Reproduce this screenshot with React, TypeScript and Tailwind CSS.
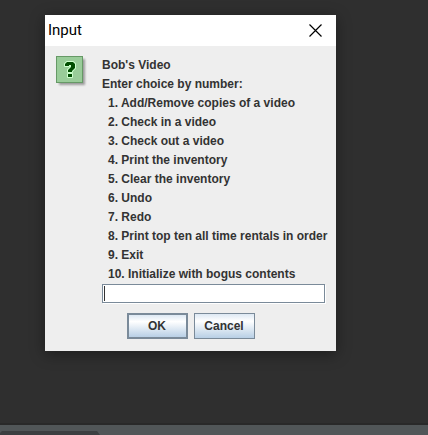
const choices = [
  "Add/Remove copies of a video",
  "Check in a video",
  "Check out a video",
  "Print the inventory",
  "Clear the inventory",
  "Undo",
  "Redo",
  "Print top ten all time rentals in order",
  "Exit",
  "Initialize with bogus contents",
];

function QuestionIcon() {
  return (
    <svg className="h-8 w-8 shrink-0" viewBox="0 0 32 32" aria-hidden="true">
      <defs>
        <filter id="soft" x="-20%" y="-20%" width="140%" height="140%">
          <feGaussianBlur stdDeviation="1.2" />
        </filter>
      </defs>
      <rect x="3" y="3" width="26" height="26" fill="#000" opacity="0.35" filter="url(#soft)" />
      <rect x="0.5" y="0.5" width="26" height="26" fill="#99cc99" stroke="#669966" />
      <path
        d="M9 10V8L11 6H17L19 8V12L16 15V16H12V14L15 11V9H13V10ZM12 18H16V21H12Z"
        fill="#ccffcc"
        stroke="#ccffcc"
        strokeWidth="2"
        strokeLinejoin="round"
      />
      <path
        d="M9 10V8L11 6H17L19 8V12L16 15V16H12V14L15 11V9H13V10ZM12 18H16V21H12Z"
        fill="#004d00"
      />
    </svg>
  );
}

function DialogButton({ label, primary = false }: { label: string; primary?: boolean }) {
  return (
    <button
      type="button"
      className={`h-[26px] w-[61px] border-[#7a8a99] bg-linear-to-b from-[#dde8f3] via-white via-30% to-[#b8cfe5] text-center ${
        primary ? "border-2" : "border"
      }`}
    >
      {label}
    </button>
  );
}

export default function App() {
  return (
    <div className="flex min-h-screen flex-col bg-[#2f2f2f]">
      <main className="flex grow items-start pt-[15px] pl-[45px]">
        <section
          role="dialog"
          aria-labelledby="dialog-title"
          className="w-[291px] bg-[#eeeeee] font-['Liberation_Sans',Arial,sans-serif] text-xs font-bold text-[#333333] shadow-[0_3px_14px_rgba(0,0,0,0.4)]"
        >
          <header className="flex h-[31px] items-center justify-between bg-white pr-[14px] pl-[3px]">
            <h1
              id="dialog-title"
              className="font-[Roboto,'Open_Sans',sans-serif] text-[15px] font-normal text-black"
            >
              Input
            </h1>
            <button type="button" aria-label="Close">
              <svg className="h-[13px] w-[13px]" viewBox="0 0 13 13" aria-hidden="true">
                <path d="M0.5 0.5L12.5 12.5M12.5 0.5L0.5 12.5" stroke="#000" strokeWidth="1.2" />
              </svg>
            </button>
          </header>
          <form className="px-[11px] pt-[10px] pb-3">
            <div className="flex gap-[14px]">
              <QuestionIcon />
              <div className="min-w-0 grow">
                <p className="leading-[19px]">Bob's Video</p>
                <label htmlFor="choice" className="block leading-[19px]">
                  Enter choice by number:
                </label>
                <ol className="pl-[6px] leading-[19px] whitespace-nowrap">
                  {choices.map((choice, i) => (
                    <li key={choice}>
                      {i + 1}. {choice}
                    </li>
                  ))}
                </ol>
                <div className="relative">
                  <input
                    id="choice"
                    type="text"
                    className="block h-[19px] w-full border border-[#7a8a99] bg-white px-[2px] shadow-[1px_1px_0_#ffffff] outline-none"
                  />
                  <span className="absolute top-[2px] left-[2px] h-[15px] w-px bg-[#333333]" />
                </div>
              </div>
            </div>
            <div className="mt-[10px] flex justify-center gap-[6px]">
              <DialogButton label="OK" primary />
              <DialogButton label="Cancel" />
            </div>
          </form>
        </section>
      </main>
      <footer className="h-3 border-t-2 border-[#292929] bg-[#515658]">
        <svg className="mt-[6px] block h-1 w-[100px]" viewBox="0 0 100 4" aria-hidden="true">
          <path d="M0 4V2L2 0H97L100 4Z" fill="#3c3f41" />
        </svg>
      </footer>
    </div>
  );
}
